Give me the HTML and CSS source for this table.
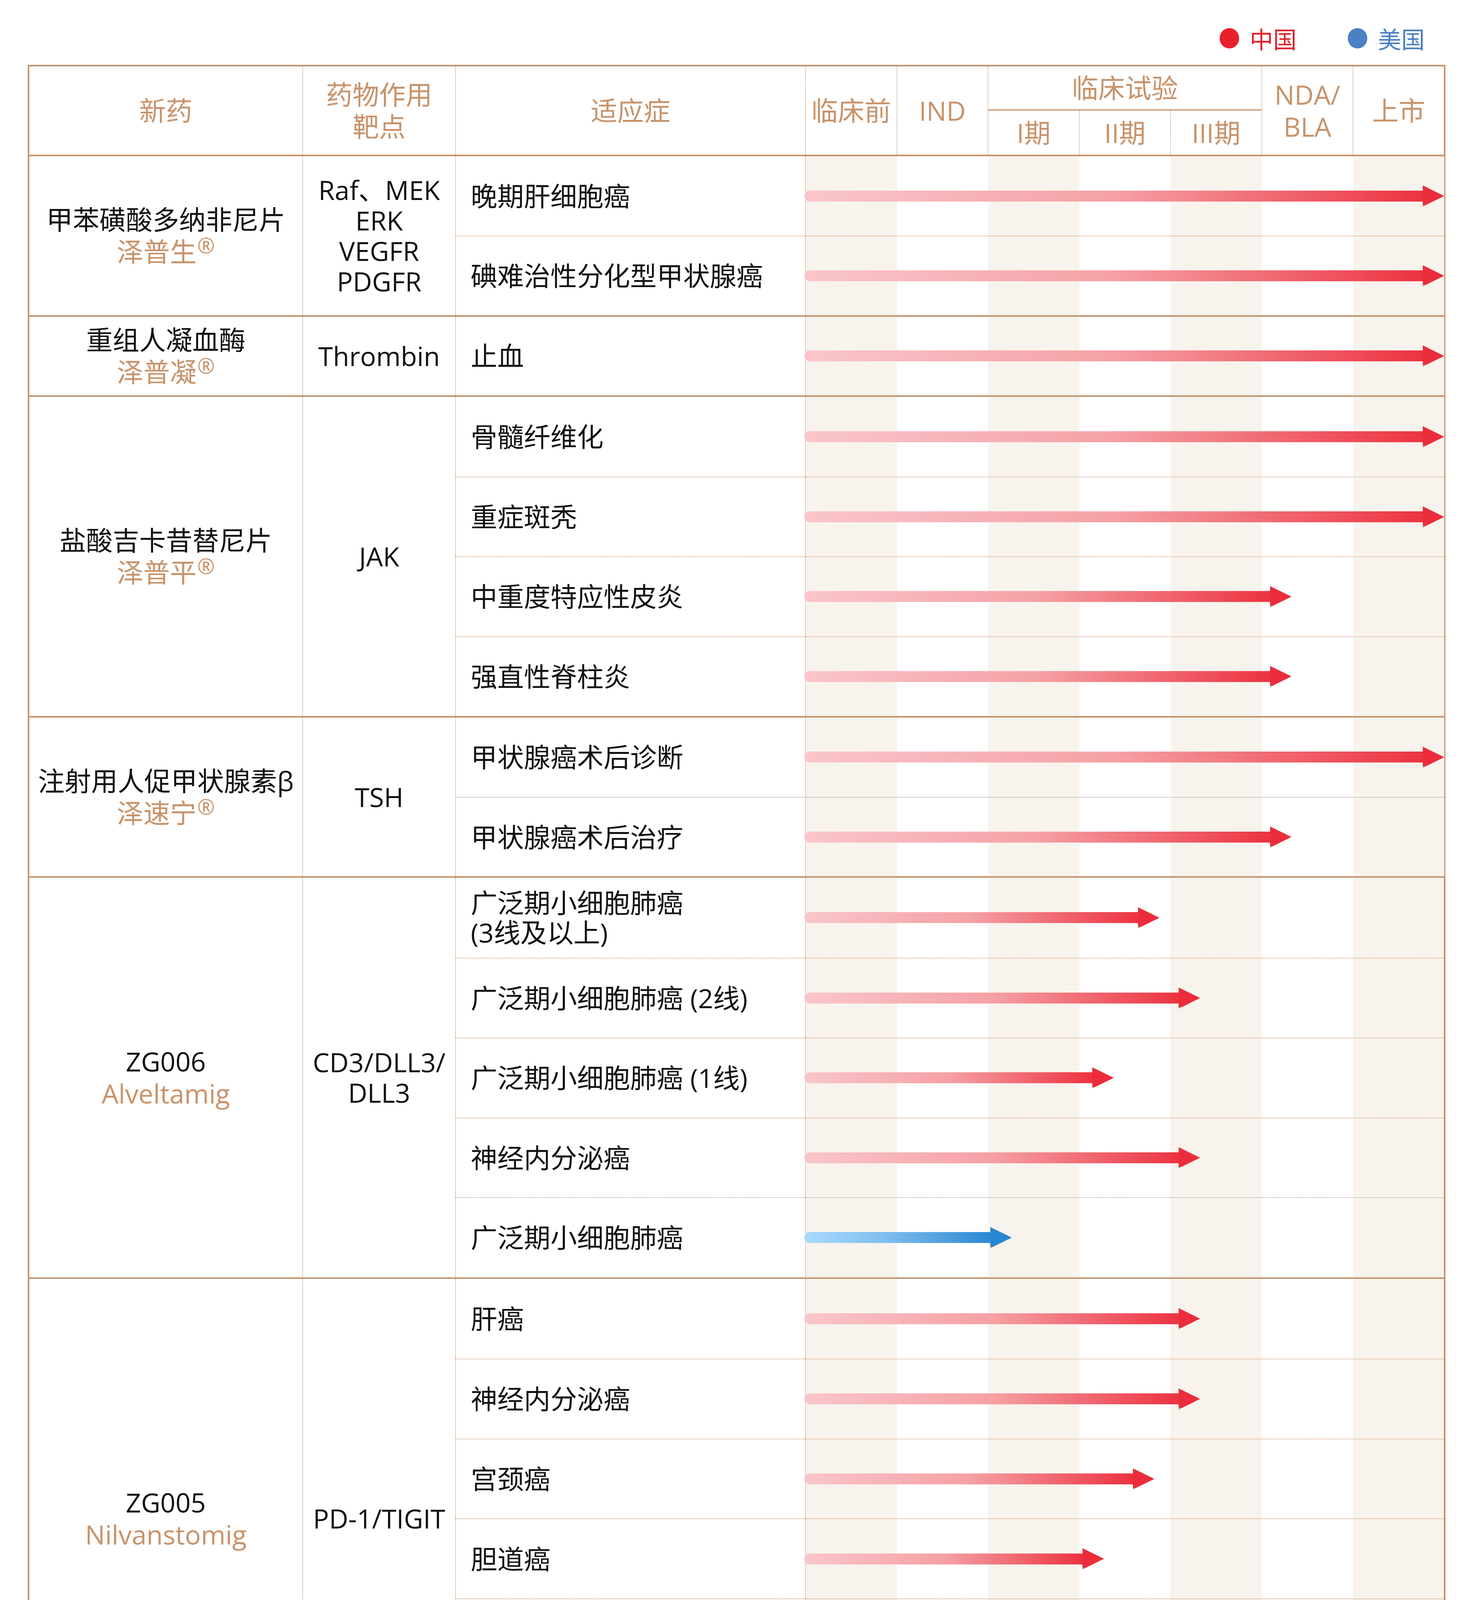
FILE: index.html
```html
<!DOCTYPE html>
<html lang="zh-CN">
<head>
<meta charset="utf-8">
<title>研发管线</title>
<link rel="stylesheet" href="styles.css">
</head>
<body>
<div class="page">
  <div class="legend">
    <div class="legend-item cn"><span class="dot"></span><span>中国</span></div>
    <div class="legend-item us"><span class="dot"></span><span>美国</span></div>
  </div>

  <div class="table">
    <div class="head">
      <div class="hc h-drug">新药</div>
      <div class="hc h-target dl">药物作用<br>靶点</div>
      <div class="hc h-ind dl">适应症</div>
      <div class="hc h-pre dl">临床前</div>
      <div class="hc h-ind2 dl">IND</div>
      <div class="hc h-trial dl">临床试验</div>
      <div class="hc h-p1 dl">I期</div>
      <div class="hc h-p2 dl">II期</div>
      <div class="hc h-p3 dl">III期</div>
      <div class="hc h-nda dl">NDA/<br>BLA</div>
      <div class="hc h-mkt dl">上市</div>
    </div>

    <div class="group r2">
      <div class="drug"><span>甲苯磺酸多纳非尼片</span><span class="brand">泽普生<sup class="reg">®</sup></span></div>
      <div class="target">Raf、MEK<br>ERK<br>VEGFR<br>PDGFR</div>
      <div class="ind">晚期肝细胞癌</div>
      <div class="track"><div class="arrow red" style="width:1638px"><i class="bar"></i><i class="head"></i></div></div>
      <div class="ind sep">碘难治性分化型甲状腺癌</div>
      <div class="track sep"><div class="arrow red" style="width:1638px"><i class="bar"></i><i class="head"></i></div></div>
    </div>

    <div class="group r1">
      <div class="drug"><span>重组人凝血酶</span><span class="brand">泽普凝<sup class="reg">®</sup></span></div>
      <div class="target">Thrombin</div>
      <div class="ind">止血</div>
      <div class="track"><div class="arrow red" style="width:1638px"><i class="bar"></i><i class="head"></i></div></div>
    </div>

    <div class="group r4">
      <div class="drug"><span>盐酸吉卡昔替尼片</span><span class="brand">泽普平<sup class="reg">®</sup></span></div>
      <div class="target">JAK</div>
      <div class="ind">骨髓纤维化</div>
      <div class="track"><div class="arrow red" style="width:1638px"><i class="bar"></i><i class="head"></i></div></div>
      <div class="ind sep">重症斑秃</div>
      <div class="track sep"><div class="arrow red" style="width:1638px"><i class="bar"></i><i class="head"></i></div></div>
      <div class="ind sep">中重度特应性皮炎</div>
      <div class="track sep"><div class="arrow red" style="width:1247px"><i class="bar"></i><i class="head"></i></div></div>
      <div class="ind sep">强直性脊柱炎</div>
      <div class="track sep"><div class="arrow red" style="width:1247px"><i class="bar"></i><i class="head"></i></div></div>
    </div>

    <div class="group r2">
      <div class="drug"><span>注射用人促甲状腺素β</span><span class="brand">泽速宁<sup class="reg">®</sup></span></div>
      <div class="target">TSH</div>
      <div class="ind">甲状腺癌术后诊断</div>
      <div class="track"><div class="arrow red" style="width:1638px"><i class="bar"></i><i class="head"></i></div></div>
      <div class="ind sep gray">甲状腺癌术后治疗</div>
      <div class="track sep gray"><div class="arrow red" style="width:1247px"><i class="bar"></i><i class="head"></i></div></div>
    </div>

    <div class="group r5">
      <div class="drug"><span>ZG006</span><span class="brand">Alveltamig</span></div>
      <div class="target">CD3/DLL3/<br>DLL3</div>
      <div class="ind tight">广泛期小细胞肺癌<br>(3线及以上)</div>
      <div class="track"><div class="arrow red" style="width:909px"><i class="bar"></i><i class="head"></i></div></div>
      <div class="ind sep">广泛期小细胞肺癌 (2线)</div>
      <div class="track sep"><div class="arrow red" style="width:1013px"><i class="bar"></i><i class="head"></i></div></div>
      <div class="ind sep">广泛期小细胞肺癌 (1线)</div>
      <div class="track sep"><div class="arrow red" style="width:792px"><i class="bar"></i><i class="head"></i></div></div>
      <div class="ind sep">神经内分泌癌</div>
      <div class="track sep"><div class="arrow red" style="width:1013px"><i class="bar"></i><i class="head"></i></div></div>
      <div class="ind sep gray">广泛期小细胞肺癌</div>
      <div class="track sep gray"><div class="arrow blue" style="width:531px"><i class="bar"></i><i class="head"></i></div></div>
    </div>

    <div class="group r6">
      <div class="drug"><span>ZG005</span><span class="brand">Nilvanstomig</span></div>
      <div class="target">PD-1/TIGIT</div>
      <div class="ind">肝癌</div>
      <div class="track"><div class="arrow red" style="width:1013px"><i class="bar"></i><i class="head"></i></div></div>
      <div class="ind sep">神经内分泌癌</div>
      <div class="track sep"><div class="arrow red" style="width:1013px"><i class="bar"></i><i class="head"></i></div></div>
      <div class="ind sep">宫颈癌</div>
      <div class="track sep"><div class="arrow red" style="width:896px"><i class="bar"></i><i class="head"></i></div></div>
      <div class="ind sep">胆道癌</div>
      <div class="track sep"><div class="arrow red" style="width:767px"><i class="bar"></i><i class="head"></i></div></div>
      <div class="ind sep">其他晚期实体瘤</div>
      <div class="track sep"><div class="arrow red" style="width:767px"><i class="bar"></i><i class="head"></i></div></div>
      <div class="ind sep">晚期实体瘤</div>
      <div class="track sep"><div class="arrow blue" style="width:481px"><i class="bar"></i><i class="head"></i></div></div>
    </div>

    <div class="group r2">
      <div class="drug"><span>ZGGS18</span></div>
      <div class="target">VEGF/<br>TGF-β</div>
      <div class="ind">非小细胞肺癌等晚期实体瘤</div>
      <div class="track"><div class="arrow red" style="width:767px"><i class="bar"></i><i class="head"></i></div></div>
      <div class="ind sep">晚期实体瘤</div>
      <div class="track sep"><div class="arrow blue" style="width:481px"><i class="bar"></i><i class="head"></i></div></div>
    </div>

    <div class="group r2">
      <div class="drug"><span>ZGGS34</span></div>
      <div class="target">MUC17/<br>CD3/CD28</div>
      <div class="ind">胃癌、胰腺癌等晚期实体瘤</div>
      <div class="track"><div class="arrow red" style="width:546px"><i class="bar"></i><i class="head"></i></div></div>
      <div class="ind sep">晚期实体瘤</div>
      <div class="track sep"><div class="arrow blue" style="width:467px"><i class="bar"></i><i class="head"></i></div></div>
    </div>

    <div class="group r2">
      <div class="drug"><span>ZGGS15</span></div>
      <div class="target">LAG-3/<br>TIGIT</div>
      <div class="ind span2">晚期实体瘤</div>
      <div class="track"><div class="arrow red" style="width:702px"><i class="bar"></i><i class="head"></i></div></div>
      <div class="track sep"><div class="arrow blue" style="width:481px"><i class="bar"></i><i class="head"></i></div></div>
    </div>

    <div class="group r2">
      <div class="drug"><span>ZG2001</span></div>
      <div class="target">泛KRAS</div>
      <div class="ind span2">KRAS突变的晚期实体瘤</div>
      <div class="track"><div class="arrow red" style="width:702px"><i class="bar"></i><i class="head"></i></div></div>
      <div class="track sep"><div class="arrow blue" style="width:481px"><i class="bar"></i><i class="head"></i></div></div>
    </div>

    <div class="group r2">
      <div class="drug"><span>ZG0895</span></div>
      <div class="target">TLR8</div>
      <div class="ind span2">晚期实体瘤</div>
      <div class="track"><div class="arrow red" style="width:702px"><i class="bar"></i><i class="head"></i></div></div>
      <div class="track sep"><div class="arrow blue" style="width:481px"><i class="bar"></i><i class="head"></i></div></div>
    </div>

    <div class="group r1">
      <div class="drug"><span>ZG2273</span></div>
      <div class="target">泛RAS</div>
      <div class="ind">RAS突变的晚期实体瘤</div>
      <div class="track"><div class="arrow red" style="width:208px"><i class="bar"></i><i class="head"></i></div></div>
    </div>
  </div>

  <div class="footer">更新至2026/7/24</div>
</div>
</body>
</html>
```

FILE: styles.css
```css
html, body {
  margin: 0;
  padding: 0;
  background: #ffffff;
}

body {
  font-family: "Open Sans", "Noto Sans CJK SC", sans-serif;
  color: #111111;
}

.page {
  width: 3768px;
}

/* legend */
.legend {
  height: 166px;
  box-sizing: border-box;
  padding: 30px 121px 0 0;
  display: flex;
  justify-content: flex-end;
  align-items: center;
  gap: 131px;
  font-family: "Noto Sans CJK SC", sans-serif;
  font-size: 60px;
  line-height: 70px;
}

.legend-item {
  display: flex;
  align-items: center;
  gap: 27px;
}

.legend-item .dot {
  width: 50px;
  height: 52px;
  border-radius: 50%;
}

.legend-item.cn { color: #e3202c; }
.legend-item.cn .dot { background: #e8202c; }
.legend-item.us { color: #4a80c4; }
.legend-item.us .dot { background: #4a80c4; }

/* table */
.table {
  margin-left: 71px;
  width: 3629px;
  box-sizing: border-box;
  border-top: 4px solid #c5936d;
  border-left: 4px solid #c5936d;
  border-right: 4px solid #c5936d;
  font-size: 68px;
  line-height: 78px;
}

.head {
  display: grid;
  grid-template-columns: 699px 391px 896px repeat(7, 1fr);
  grid-template-rows: 1fr 1fr;
  height: 230px;
  box-sizing: border-box;
  border-bottom: 4px solid #c5936d;
  color: #c8936a;
  line-height: 82px;
}

.hc {
  display: flex;
  align-items: center;
  justify-content: center;
  text-align: center;
  grid-row: 1 / 3;
  white-space: nowrap;
}

.dl { border-left: 2px dotted #d09c74; }

.h-drug { grid-column: 1; }
.h-target { grid-column: 2; }
.h-ind { grid-column: 3; }
.h-pre { grid-column: 4; }
.h-ind2 { grid-column: 5; }
.h-trial {
  grid-column: 6 / 9;
  grid-row: 1;
  border-bottom: 3px solid #c5936d;
}
.h-p1 { grid-column: 6; grid-row: 2; }
.h-p2 { grid-column: 7; grid-row: 2; }
.h-p3 { grid-column: 8; grid-row: 2; }
.h-nda { grid-column: 9; }
.h-mkt { grid-column: 10; }

/* body groups */
.group {
  display: grid;
  grid-template-columns: 699px 391px 896px 1fr;
  box-sizing: border-box;
  border-bottom: 4px solid #c5936d;
}

.r1 { height: 205.25px; grid-template-rows: 1fr; }
.r2 { height: 410.5px; grid-template-rows: repeat(2, 1fr); }
.r4 { height: 821px; grid-template-rows: repeat(4, 1fr); }
.r5 { height: 1026.25px; grid-template-rows: repeat(5, 1fr); }
.r6 { height: 1231.5px; grid-template-rows: repeat(6, 1fr); }

.drug {
  grid-column: 1;
  grid-row: 1 / -1;
  display: flex;
  flex-direction: column;
  align-items: center;
  justify-content: center;
  white-space: nowrap;
  line-height: 82px;
}

.brand {
  color: #c8936a;
}

.reg {
  font-size: 54px;
  line-height: 0;
  vertical-align: 22px;
  margin-left: 2px;
}

.target {
  grid-column: 2;
  grid-row: 1 / -1;
  display: flex;
  align-items: center;
  justify-content: center;
  text-align: center;
  white-space: nowrap;
  border-left: 2px dotted #d09c74;
}

.ind {
  grid-column: 3;
  display: flex;
  align-items: center;
  padding-left: 38px;
  white-space: nowrap;
  border-left: 2px dotted #d09c74;
}

.ind.tight { line-height: 76px; }

.ind.span2 { grid-row: span 2; }

.track {
  grid-column: 4;
  display: flex;
  align-items: center;
  border-left: 2px dotted #d09c74;
  background: linear-gradient(to right,
    #f8f3ed 0, #f8f3ed 14.2857%,
    transparent 14.2857%, transparent 28.5714%,
    #f8f3ed 28.5714%, #f8f3ed 42.8571%,
    transparent 42.8571%, transparent 57.1429%,
    #f8f3ed 57.1429%, #f8f3ed 71.4286%,
    transparent 71.4286%, transparent 85.7143%,
    #f8f3ed 85.7143%, #f8f3ed 100%);
}

.sep { border-top: 2px dotted #d09c74; }
.sep.gray { border-top-color: #a8a8a8; }

/* arrows */
.arrow {
  display: flex;
  align-items: center;
  height: 54px;
  margin-left: -4px;
  flex: none;
}

.arrow .bar {
  flex: 1;
  height: 28px;
  border-radius: 14px 0 0 14px;
}

.arrow .head {
  width: 55px;
  height: 54px;
  flex: none;
  clip-path: polygon(0 0, 100% 50%, 0 100%);
}

.arrow.red .bar { background: linear-gradient(to right, #f9c6cb, #f5a1a6 50%, #ec3341); }
.arrow.red .head { background: #eb2d3b; }
.arrow.blue .bar { background: linear-gradient(to right, #a9dafd, #7dbdf0 45%, #2b88d2); }
.arrow.blue .head { background: #2886d1; }

/* footer */
.footer {
  margin-top: 70px;
  text-align: center;
  font-family: "Noto Sans CJK SC", sans-serif;
  font-size: 74px;
  line-height: 100px;
  color: #c89e5e;
}
```
